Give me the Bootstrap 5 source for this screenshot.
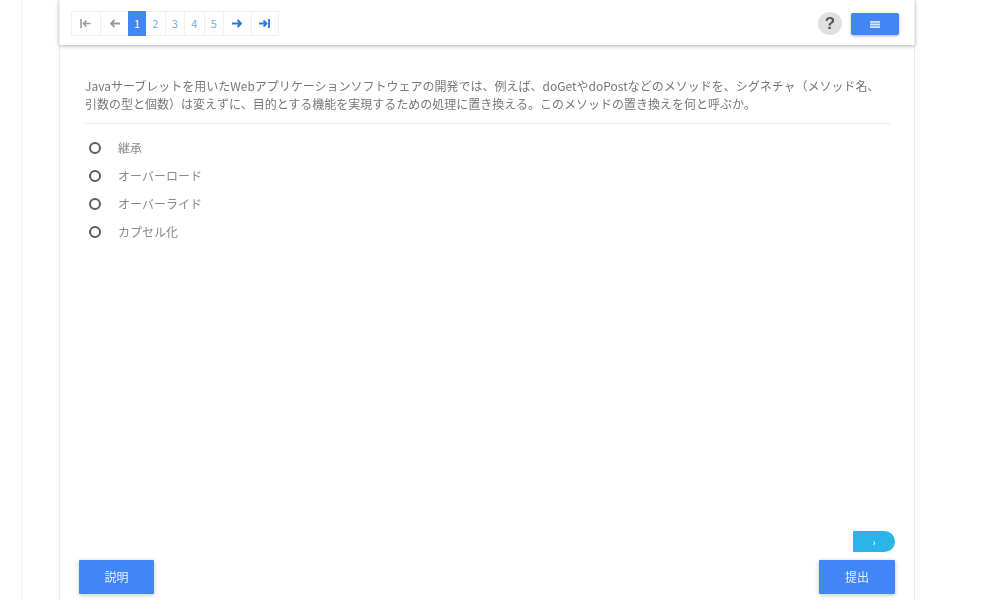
<!DOCTYPE html>
<html lang="ja">
<head>
<meta charset="utf-8">
<title>Quiz</title>
<link href="https://cdn.jsdelivr.net/npm/bootstrap@5.3.0/dist/css/bootstrap.min.css" rel="stylesheet">
<style>
html,body{height:600px;overflow:hidden;background:#fff}
body{font-family:"Noto Sans CJK JP","Liberation Sans",sans-serif;color:#6a6a6a}
.outer-frame{margin-left:21px;width:895px;height:600px;border-left:1px solid #f1f1f1;padding-left:37px;filter:blur(.6px)}
.sheet{width:856px;height:600px;border:solid #ececec;border-width:0 1px;display:flex;flex-direction:column}
.top-bar{height:45px;padding:11px 16px 0 12px;box-shadow:0 1px 4px rgba(0,0,0,.3);display:flex;justify-content:space-between;flex:none;position:relative;margin:0 -1px}
.pager{margin:0;height:25px;line-height:1}
.pager .page-link{height:25px;padding:0;display:flex;align-items:center;justify-content:center;border-color:#eef0f2;color:#7ea9ea;border-radius:0!important;font-size:11px}
.pager .page-item.active .page-link{background:#4285f4;border-color:#4285f4;color:#fff}
.pager .w-arrow .page-link{width:29.500px}
.pager .w-arrow-r .page-link{width:28.500px}
.pager .w-num .page-link{width:20.500px}
.pager .w-one .page-link{width:18px}
.help-dot{width:24px;height:23px;margin:1px 9px 0 0;background:#e0e0e0;border-radius:50%;color:#555;font:700 17px/23px "Liberation Sans",sans-serif;text-align:center}
.menu-btn{width:48px;height:22px;margin-top:2px;background:#4285f4;border:0;border-radius:2px;box-shadow:0 1px 3px rgba(0,0,0,.3);padding:0;display:flex;align-items:center;justify-content:center}
.quiz-body{flex:1;padding:32px 24px 0 25px;position:relative}
.stem{font-size:12px;line-height:17.5px;margin:0;color:#777;white-space:nowrap}
.rule{margin:11px 0 10px;border-color:#eaeaea;opacity:1}
.choice{height:28px;display:flex;align-items:center;font-size:12px;margin:0;padding-left:4px;color:#8a8a8a}
.choice .ring{width:12px;height:12px;border:2px solid #5c5c5c;border-radius:50%;margin-right:17px;flex:none;appearance:none;background:#fff}
.foot-btns{position:absolute;left:19px;right:19px;bottom:6px;display:flex;justify-content:space-between}
.act-btn{height:34px;background:#4285f4;border:0;border-radius:1px;color:#e8f0fe;font-size:12px;box-shadow:0 1px 4px rgba(0,0,0,.25);padding:0}
.w-left,.w-right{width:76px}
.w-left{width:75px}
.next-tab{position:absolute;right:19px;bottom:48px;width:42px;height:21px;background:#29b6e6;border:0;border-radius:0 11px 11px 0;color:#fff;font-size:10px;line-height:21px;padding:0;text-align:center}
</style>
</head>
<body>
<div class="outer-frame">
<div class="sheet">
  <div class="top-bar">
    <ul class="pagination pager">
      <li class="page-item w-arrow"><a class="page-link" href="#"><svg width="11" height="9" viewBox="0 0 11 9"><path d="M1 0v9M10.500 4.500H3.500M6.500 1.500l-3 3 3 3" fill="none" stroke="#9a9a9a" stroke-width="1.600"/></svg></a></li>
      <li class="page-item w-arrow"><a class="page-link" href="#"><svg width="11" height="9" viewBox="0 0 11 9"><path d="M11 4.500H2M5.500 1l-3.500 3.500 3.500 3.500" fill="none" stroke="#9a9a9a" stroke-width="1.800"/></svg></a></li>
      <li class="page-item active w-one"><a class="page-link" href="#">1</a></li>
      <li class="page-item w-num"><a class="page-link" href="#">2</a></li>
      <li class="page-item w-num"><a class="page-link" href="#">3</a></li>
      <li class="page-item w-num"><a class="page-link" href="#">4</a></li>
      <li class="page-item w-num"><a class="page-link" href="#">5</a></li>
      <li class="page-item w-arrow-r"><a class="page-link" href="#"><svg width="11" height="9" viewBox="0 0 11 9"><path d="M0 4.500H9M5.500 1l3.500 3.500-3.500 3.500" fill="none" stroke="#2f76e8" stroke-width="2"/></svg></a></li>
      <li class="page-item w-arrow-r"><a class="page-link" href="#"><svg width="11" height="9" viewBox="0 0 11 9"><path d="M10 0v9M0 4.500H7.500M4.500 1.500l3 3-3 3" fill="none" stroke="#2f76e8" stroke-width="1.800"/></svg></a></li>
    </ul>
    <div class="d-flex">
      <div class="help-dot">?</div>
      <button class="menu-btn" type="button" aria-label="menu"><svg width="10" height="7" viewBox="0 0 10 7"><path d="M0 0h10v1.800H0zM0 2.600h10v1.800H0zM0 5.200h10v1.800H0z" fill="#d5e4fc"/></svg></button>
    </div>
  </div>
  <div class="quiz-body">
    <p class="stem">Javaサーブレットを用いたWebアプリケーションソフトウェアの開発では、例えば、doGetやdoPostなどのメソッドを、シグネチャ（メソッド名、<br>引数の型と個数）は変えずに、目的とする機能を実現するための処理に置き換える。このメソッドの置き換えを何と呼ぶか。</p>
    <hr class="rule">
    <label class="choice"><input class="ring" type="radio" name="q">継承</label>
    <label class="choice"><input class="ring" type="radio" name="q">オーバーロード</label>
    <label class="choice"><input class="ring" type="radio" name="q">オーバーライド</label>
    <label class="choice"><input class="ring" type="radio" name="q">カプセル化</label>
    <button class="next-tab" type="button">›</button>
    <div class="foot-btns">
      <button class="act-btn w-left" type="button">説明</button>
      <button class="act-btn w-right" type="button">提出</button>
    </div>
  </div>
</div>
</div>
<script src="https://cdn.jsdelivr.net/npm/bootstrap@5.3.0/dist/js/bootstrap.bundle.min.js"></script>
</body>
</html>
